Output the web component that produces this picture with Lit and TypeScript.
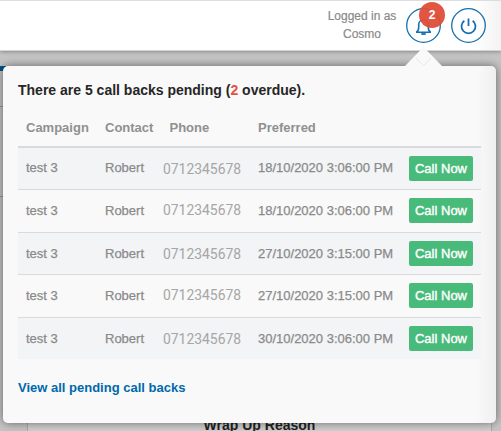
import { LitElement, html, css, svg } from "lit";
import { customElement } from "lit/decorators.js";

interface CallBack {
  campaign: string;
  contact: string;
  phone: string;
  preferred: string;
}

const phone = "0712345678";
const callBacks: CallBack[] = [
  "18/10/2020 3:06:00 PM",
  "18/10/2020 3:06:00 PM",
  "27/10/2020 3:15:00 PM",
  "27/10/2020 3:15:00 PM",
  "30/10/2020 3:06:00 PM",
].map((preferred) => ({ campaign: "test 3", contact: "Robert", phone, preferred }));

const bell = svg`<path stroke-width="1.6" d="M10 24.3h15M10.3 24.3c1.8-1 2.4-2 2.4-5v-2.5a4.8 5 0 0 1 9.6 0v2.5c0 3 .6 4 2.4 5" /><path stroke-width="1.8" d="M15.3 26h4.4" />`;

@customElement("call-back-panel")
export class CallBackPanel extends LitElement {
  static styles = css`
    :host {
      display: block;
      position: relative;
      box-sizing: border-box;
      width: 493px;
      height: 357px;
      padding: 16px 15px 0;
      border-radius: 5px;
      background: linear-gradient(90deg, #f9f9f9 474px, #efefef 493px);
      box-shadow: 0 0 10px rgba(0, 0, 0, 0.5);
    }
    .arrow {
      position: absolute;
      left: 402px;
      top: -19px;
      width: 37px;
      height: 19px;
      fill: #f9f9f9;
    }
    .arrow .inner { fill: none; stroke: #e6e6e6; }
    h2 {
      margin: 0;
      height: 17px;
      font-size: 14px;
      line-height: 17px;
      font-weight: bold;
      color: #262626;
      white-space: nowrap;
    }
    .overdue { color: #e0523c; }
    .grid { display: block; margin-top: 5px; }
    .row {
      display: grid;
      grid-template-columns: 79px 58px 95px 151px 64px;
      padding-left: 8px;
      height: 42.5px;
      box-sizing: border-box;
      border-top: 1px solid #d8dadd;
      white-space: nowrap;
      -webkit-text-stroke: 0.25px currentColor;
    }
    .head { border: 0; height: 42px; font-weight: bold; line-height: 47px; color: #909090; -webkit-text-stroke: 0; }
    .head .phone-title { padding-left: 6.5px; }
    .head + .row { border-top: 2px solid #d8dadd; height: 43px; }
    .row:nth-child(even) { background: #f2f4f6; }
    .cell { line-height: 42px; }
    .phone {
      font-family: Roboto, sans-serif;
      font-size: 13.9px;
      line-height: 43px;
      color: #a6a6a6;
      -webkit-text-stroke: 0;
    }
    .head + .row .cell { line-height: 40px; }
    .row:nth-child(odd) .phone { line-height: 40px; }
    button {
      align-self: start;
      margin: 8px 0 0;
      padding: 0;
      height: 25px;
      border: 0;
      border-radius: 2px;
      background: #48ba7a;
      color: #fff;
      font: 13px/23px "Liberation Sans", sans-serif;
      -webkit-text-stroke: 0.4px #fff;
    }
    .link {
      display: inline-block;
      margin-top: 20px;
      font-size: 13px;
      line-height: 17px;
      font-weight: bold;
      color: #0068ab;
      text-decoration: none;
    }
  `;

  render() {
    return html`
      <svg class="arrow" viewBox="0 0 37 19">
        <path d="M0 19L18.5 0L37 19z" />
        <path class="inner" d="M11 11L18.5 18.5L26 11" />
      </svg>
      <h2>There are 5 call backs pending (<span class="overdue">2</span> overdue).</h2>
      <div class="grid">
        <div class="row head">
          <span>Campaign</span><span>Contact</span><span class="phone-title">Phone</span><span>Preferred</span>
        </div>
        ${callBacks.map(
          (c) => html`<div class="row">
            <span class="cell">${c.campaign}</span>
            <span class="cell">${c.contact}</span>
            <span class="phone">${c.phone}</span>
            <span class="cell">${c.preferred}</span>
            <button>Call Now</button>
          </div>`
        )}
      </div>
      <a class="link">View all pending call backs</a>
    `;
  }
}

@customElement("app-root")
export class AppRoot extends LitElement {
  static styles = css`
    :host {
      display: block;
      position: relative;
      width: 501px;
      height: 431px;
      overflow: hidden;
      background: #c5c5c5;
      color: #8a8a8a;
      font: 13px/18px "Liberation Sans", sans-serif;
    }
    header {
      display: flex;
      box-sizing: border-box;
      height: 51px;
      padding: 7px 15px 0 0;
      justify-content: flex-end;
      border-top: 1px solid #ddd;
      border-bottom: 1px solid #d5d5d5;
      background: linear-gradient(90deg, #fff 474px, #f3f3f3);
      box-shadow: 0 1px 4px rgba(0, 0, 0, 0.3);
    }
    .user {
      width: 80px;
      margin: -1px 4px 0 0;
      text-align: center;
      font-size: 12px;
      -webkit-text-stroke: 0.2px currentColor;
    }
    .round { position: relative; width: 35px; height: 35px; margin-right: 10px; }
    .round:last-child { margin-right: 0; }
    .round svg { display: block; fill: none; stroke: #1470b0; stroke-width: 1.3; }
    .badge {
      position: absolute;
      left: 13px;
      top: -6px;
      width: 26px;
      height: 26px;
      border-radius: 50%;
      background: rgba(223, 77, 54, 0.95);
      color: #fff;
      font-weight: bold;
      font-size: 12px;
      line-height: 26px;
      text-align: center;
    }
    .page { position: relative; height: 380px; }
    .strip { position: absolute; left: 0; top: 15px; width: 20px; height: 5px; background: #00558f; }
    .rule { position: absolute; left: 0; width: 10px; height: 1px; background: #999; }
    .rule.first { top: 55px; }
    .rule.second { top: 145px; }
    .behind {
      position: absolute;
      box-sizing: border-box;
      left: 27px;
      top: 350px;
      width: 465px;
      height: 30px;
      padding-top: 15px;
      border: 1px solid #aaa;
      border-width: 0 1px;
      background: #d0d0d0;
      color: #222;
      text-align: center;
      font-weight: bold;
      font-size: 14px;
    }
    call-back-panel { position: absolute; left: 3px; top: 15px; }
  `;

  render() {
    return html`
      <header>
        <div class="user">Logged in as<br />Cosmo</div>
        <div class="round">
          <svg width="35" height="35" viewBox="0 0 35 35"><circle cx="17.5" cy="17.5" r="16.8" />${bell}</svg>
          <span class="badge">2</span>
        </div>
        <div class="round">
          <svg width="35" height="35" viewBox="0 0 35 35">
            <circle cx="17.5" cy="17.5" r="16.8" />
            <path stroke-width="1.8" d="M17.5 10.5V18M13.3 12.7a7 7 0 1 0 8.4 0" />
          </svg>
        </div>
      </header>
      <div class="page">
        <div class="strip"></div>
        <div class="rule first"></div>
        <div class="rule second"></div>
        <div class="behind">Wrap Up Reason</div>
        <call-back-panel></call-back-panel>
      </div>
    `;
  }
}
